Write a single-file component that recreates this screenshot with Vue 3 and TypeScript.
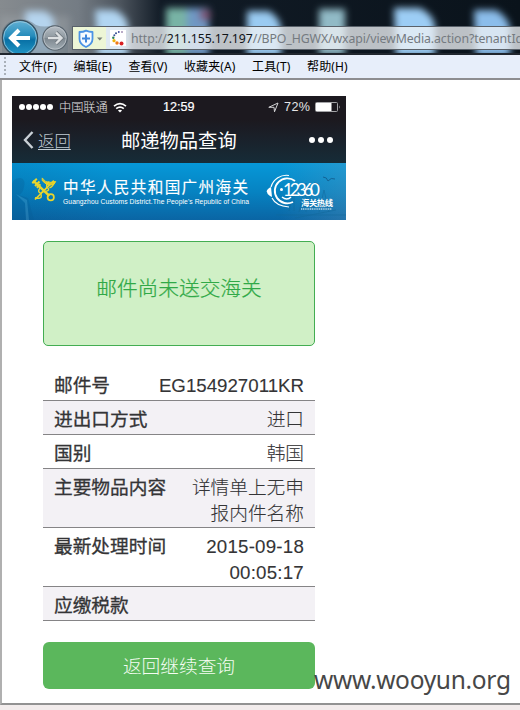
<script setup lang="ts">
interface Row {
  label: string
  lines: string[]
  wide?: boolean
}

const menus: string[] = ['文件(F)', '编辑(E)', '查看(V)', '收藏夹(A)', '工具(T)', '帮助(H)']

const rows: Row[] = [
  { label: '邮件号', lines: ['EG154927011KR'] },
  { label: '进出口方式', lines: ['进口'] },
  { label: '国别', lines: ['韩国'] },
  { label: '主要物品内容', lines: ['详情单上无申', '报内件名称'] },
  { label: '最新处理时间', lines: ['2015-09-18', '00:05:17'], wide: true },
  { label: '应缴税款', lines: [] },
]
</script>

<template>
  <div class="window">
    <header class="glass">
      <svg class="backdrop" width="520" height="53" viewBox="0 0 520 53" aria-hidden="true">
        <defs>
          <linearGradient id="glassBase" x1="0" x2="1" y1="0" y2="0">
            <stop offset="0" stop-color="#868b8f" />
            <stop offset=".15" stop-color="#747c84" />
            <stop offset=".23" stop-color="#4d555e" />
            <stop offset=".31" stop-color="#111b26" />
            <stop offset="1" stop-color="#0a131b" />
          </linearGradient>
          <filter id="soft" x="-10%" y="-40%" width="120%" height="180%">
            <feGaussianBlur stdDeviation="3.600" />
          </filter>
        </defs>
        <rect width="520" height="53" fill="url(#glassBase)" />
        <g filter="url(#soft)">
          <path d="M0 16h70v40H0z" fill="#a2a8ac" opacity=".4" />
          <path d="M25 11h19q11 4 10 14v30H27z" fill="#b5d4ee" />
          <path d="M95 10h20q12 6 13 16v30H98z" fill="#b1d5f2" />
          <path d="M166 8h24v48h-24z" fill="#78b3a5" />
          <path d="M187 8h22v48h-22z" fill="#7098c4" />
          <circle cx="205" cy="15" r="6" fill="#7c5373" />
          <path d="M247 11h22q11 7 12 17v28h-34z" fill="#9acbf2" />
          <path d="M319 9h26v46h-26z" fill="#91bac6" />
          <path d="M394 8h26q13 6 15 18v30h-39z" fill="#9ccdf5" />
          <path d="M474 10h22q12 7 14 18v28h-34z" fill="#8bbdeb" />
        </g>
      </svg>
      <svg class="nav" width="72" height="35" viewBox="0 0 72 35">
        <defs>
          <linearGradient id="backFill" x1="0" x2="0" y1="0" y2="1">
            <stop offset="0" stop-color="#63b2d5" />
            <stop offset=".45" stop-color="#258bbb" />
            <stop offset=".55" stop-color="#0870a5" />
            <stop offset="1" stop-color="#2399c8" />
          </linearGradient>
          <linearGradient id="fwdFill" x1="0" x2="0" y1="0" y2="1">
            <stop offset="0" stop-color="#b7bec5" />
            <stop offset=".5" stop-color="#8e989f" />
            <stop offset=".52" stop-color="#7d878f" />
            <stop offset="1" stop-color="#a4afb6" />
          </linearGradient>
        </defs>
        <path d="M2 12Q8 1 20 1q9 0 16 6 8 3 18 0 10 0 14 11v17H2z" fill="#6e7b85" opacity=".5" />
        <circle cx="20" cy="20" r="17.6" fill="url(#backFill)" stroke="#39505f" stroke-width="1.3" />
        <circle cx="20" cy="20" r="16.4" fill="none" stroke="#a0c9dd" stroke-width=".8" />
        <path d="M30 20H12M19 12l-8 8 8 8" fill="none" stroke="#fff" stroke-width="4" />
        <circle cx="55" cy="20" r="12.2" fill="url(#fwdFill)" stroke="#59656f" stroke-width="1.2" />
        <circle cx="55" cy="20" r="11.2" fill="none" stroke="#c5ccd1" stroke-width=".7" />
        <path d="M48 20h13M56 14.5l5.5 5.5-5.5 5.5" fill="none" stroke="#717980" stroke-width="4" />
        <path d="M48 20h13M56 14.5l5.5 5.5-5.5 5.5" fill="none" stroke="#dde0e2" stroke-width="2.4" />
      </svg>
      <div class="address">
        <div class="shield">
          <svg width="33" height="22" viewBox="0 0 33 22">
            <path d="M6.5 5q4 0 6.500-1.400Q16 5 19.500 5v7q0 5-6.500 8-6.500-3-6.500-8z" fill="#f6fbff" stroke="#4b93e5" stroke-width="1.800" stroke-linejoin="round" />
            <path d="M13 7.500v8M9 11.500h8" stroke="#3f86dc" stroke-width="2" />
            <path d="M24 10.500h5.500l-2.700 3z" fill="#777f78" />
          </svg>
        </div>
        <svg class="favicon" width="16" height="16" viewBox="0 0 16 16">
          <rect width="16" height="16" fill="#fff" />
          <circle cx="12" cy="2" r=".8" fill="#604080" />
          <circle cx="8.800" cy="2" r=".9" fill="#3b4598" />
          <circle cx="6" cy="3.300" r="1" fill="#35508f" />
          <circle cx="4.300" cy="5.300" r="1" fill="#38509a" />
          <circle cx="3.300" cy="7.700" r="1.200" fill="#2c8050" />
          <circle cx="4" cy="10.700" r="1.600" fill="#f0b30d" />
          <circle cx="7" cy="13" r="1.700" fill="#ef7b19" />
          <circle cx="11.500" cy="13.500" r="2" fill="#d82124" />
        </svg>
        <span class="url">http://<b>211.155.17.197</b>//BPO_HGWX/wxapi/viewMedia.action?tenantId</span>
      </div>
    </header>

    <nav class="menubar">
      <i class="grip"></i>
      <span v-for="m in menus" :key="m" class="menu">{{ m }}</span>
    </nav>

    <main class="page">
      <section class="phone">
        <div class="phone-top">
          <div class="status">
            <span class="dots"><i v-for="n in 5" :key="n"></i></span>
            <span class="carrier">中国联通</span>
            <svg class="wifi" width="14" height="11" viewBox="0 0 14 11" fill="none" stroke="#fff" stroke-width="1.700">
              <path d="M1 4.200q6-5.200 12 0M3.200 6.700q3.800-3.200 7.600 0" />
              <path d="M7 10.500L4.900 8.500q2.100-1.500 4.200 0z" fill="#fff" stroke="none" />
            </svg>
            <span class="clock">12:59</span>
            <svg class="locate" width="11" height="11" viewBox="0 0 11 11">
              <path d="M.8 5.300L10 1 6.500 9.800 6 5.300z" fill="none" stroke="#d4d4d6" stroke-width="1" />
            </svg>
            <span class="percent">72%</span>
            <svg class="battery" width="26" height="10" viewBox="0 0 26 10">
              <rect x=".5" y=".5" width="22" height="9" rx="1" fill="none" stroke="#a4a4a7" />
              <rect x="1" y="1" width="15.500" height="8" fill="#fff" />
              <path d="M24 3.200q1.200 1.800 0 3.600z" fill="#ddd" />
            </svg>
          </div>
          <div class="titlebar">
            <svg width="11" height="18" viewBox="0 0 11 18"><path d="M9.500 1L2 9l7.500 8" fill="none" stroke="#c9d0d6" stroke-width="2.400" /></svg>
            <a class="back">返回</a>
            <h1>邮递物品查询</h1>
            <span class="more"><i></i><i></i><i></i></span>
          </div>
        </div>

        <div class="banner">
          <svg class="art" width="334" height="57" viewBox="0 0 334 57">
            <g fill="#075c95" opacity=".28">
              <path d="M0 21q2-7 9-6 5 2 3 9-1 6-5 8l9 3 6 22H0z" />
              <path d="M4 31l9 9 1 17h3l-2-20z" fill="#5aa9d2" />
            </g>
            <g fill="none" stroke="#12679a" stroke-width=".8" opacity=".65">
              <path d="M264 52h70M277 48l5-20v20M287 49l7-29v29M294 24l9 23M307 49l5-22 5 22M283 55l41-8" />
              <path d="M311 14q4 0 5 4 3-4 7-2M302 20q3 0 5 2" stroke="#0d4b79" stroke-width="1" />
            </g>
          </svg>
          <svg class="emblem" width="30" height="30" viewBox="0 0 30 30" fill="none" stroke="#ead52c">
            <path d="M3 4l18 17" stroke-width="2.800" />
            <path d="M2 7l5-5M5 10l5-5M7 12l4-4" stroke-width="2.200" />
            <circle cx="22.500" cy="22.500" r="3.500" stroke-width="1.900" />
            <path d="M26 4L5 25" stroke-width="1.900" />
            <path d="M13 1q3 5 8 5 4 0 7-1-1 4-6 4-5 0-9-5z" fill="#e2c928" stroke-width="1" />
            <path d="M21 5q-5 3-2 7 3 3-2 4-7 0-5 5 0 4-7 2M27 5q-2 6-6 7M11 12q-4 4 0 6" stroke-width="1.600" />
          </svg>
          <div class="banner-text">
            <strong>中华人民共和国广州海关</strong>
            <small>Guangzhou Customs District.The People's Republic of China</small>
          </div>
          <svg class="hotline" width="68" height="38" viewBox="0 0 68 38">
            <g fill="none" stroke="#fff">
              <path d="M29 7A12.500 12.500 0 1 0 27 28" stroke-width="1.900" />
              <path d="M23 1.500A16 16 0 0 0 5 13M6 24q4 8 17 9" stroke-width="1.200" />
              <path d="M16 23q5 4 9 0" stroke-width="1.500" />
            </g>
            <path d="M5 13q-8 4-1 9l2 1z" fill="#fff" />
            <circle cx="15.500" cy="15.500" r="1.500" fill="#fff" />
            <text x="17" y="22" class="digits" textLength="37" lengthAdjust="spacing">12360</text>
            <text x="35" y="32" class="hot" textLength="32">海关热线</text>
            <path d="M35 35h31" stroke="#d8edf6" stroke-width="1.500" stroke-dasharray="1.200 .6" opacity=".8" />
          </svg>
        </div>

        <div class="content">
          <div class="notice">邮件尚未送交海关</div>
          <dl class="table">
            <div v-for="r in rows" :key="r.label" class="row" :class="{ wide: r.wide }">
              <dt>{{ r.label }}</dt>
              <dd><span v-for="l in r.lines" :key="l">{{ l }}</span></dd>
            </div>
          </dl>
          <button class="again">返回继续查询</button>
        </div>
      </section>
      <div class="watermark">www.wooyun.org</div>
    </main>
  </div>
</template>

<style>
body {
  margin: 0;
  overflow: hidden;
}
</style>

<style scoped>
* {
  box-sizing: border-box;
}
.window {
  width: 520px;
  height: 710px;
  display: flex;
  flex-direction: column;
  overflow: hidden;
  background: #f2ecec;
  font-family: "Liberation Sans", "Noto Sans CJK SC", sans-serif;
}
.glass {
  position: relative;
  height: 53px;
  flex: none;
  display: flex;
  align-items: flex-start;
  padding-top: 18px;
  overflow: hidden;
}
.backdrop {
  position: absolute;
  left: 0;
  top: 0;
}
.nav {
  position: relative;
  flex: none;
}
.address {
  position: relative;
  flex: none;
  width: 460px;
  height: 24px;
  margin-top: 8px;
  border: 1px solid #59616a;
  background: rgba(236, 240, 244, 0.79);
  display: flex;
  align-items: center;
}
.shield {
  width: 33px;
  height: 22px;
  background: #edf6d6;
}
.favicon {
  margin-left: 4px;
  flex: none;
}
.url {
  margin-left: 5px;
  padding-top: 2px;
  font: 12.3px/22px "Noto Sans", sans-serif;
  letter-spacing: -0.1px;
  color: #747a80;
  white-space: nowrap;
}
.url b {
  font-weight: 400;
  color: #101418;
}
.menubar {
  height: 27px;
  flex: none;
  display: flex;
  align-items: center;
  border-top: 2px solid #20262e;
  border-bottom: 2px solid #8d8d90;
  background: #e7eefa;
  color: #000;
  font: 12px/22px "Noto Sans", "Noto Sans CJK SC", sans-serif;
}
.grip {
  width: 2px;
  height: 20px;
  margin: 0 13px 0 4px;
  background: repeating-linear-gradient(#a9b0b9 0 2px, transparent 2px 4px);
}
.menu {
  white-space: nowrap;
  margin-right: 16.6px;
  letter-spacing: 0.1px;
}
.page {
  position: relative;
  height: 625px;
  flex: none;
  border-left: 2px solid #b0b0b0;
  border-bottom: 2px solid #929292;
  background: #fff;
  padding: 16px 0 0 10px;
}
.phone {
  width: 334px;
  display: flex;
  flex-direction: column;
}
.phone-top {
  height: 67px;
  background: linear-gradient(#1c191f 0 35%, #1a2029 60%, #162c38);
  color: #fff;
}
.status {
  height: 22px;
  display: flex;
  align-items: center;
  padding-left: 7px;
  white-space: nowrap;
}
.dots {
  display: flex;
  gap: 1px;
  width: 39px;
}
.dots i {
  width: 6px;
  height: 6px;
  border-radius: 50%;
  background: #fff;
}
.carrier {
  width: 50px;
  margin-left: 1px;
  font-size: 12.2px;
  font-weight: 300;
  color: #e4e4e6;
}
.wifi {
  margin-left: 4px;
}
.clock {
  width: 35px;
  margin-left: 36px;
  font-size: 12.6px;
  -webkit-text-stroke: 0.2px #fff;
}
.locate {
  margin-left: 70px;
}
.percent {
  width: 27px;
  margin-left: 5px;
  font-size: 12.6px;
  letter-spacing: 0.4px;
  color: #e5e5e6;
}
.battery {
  margin-left: 4px;
}
.titlebar {
  height: 45px;
  display: flex;
  align-items: center;
  padding: 0 0 1px 11px;
}
.back {
  width: 34px;
  margin-left: 4px;
  font-size: 16.4px;
  font-weight: 300;
  text-decoration: underline;
  text-underline-offset: 2px;
  text-decoration-thickness: 1px;
  color: #c1cbd3;
}
h1 {
  width: 120px;
  margin: 0 0 0 49px;
  font-size: 19.3px;
  font-weight: 400;
  white-space: nowrap;
}
.more {
  display: flex;
  gap: 3px;
  margin-left: 68px;
}
.more i {
  width: 6px;
  height: 6px;
  border-radius: 50%;
  background: #fff;
}
.banner {
  position: relative;
  height: 57px;
  display: flex;
  background: linear-gradient(90deg, rgba(0, 60, 110, 0.12), transparent 30% 80%, rgba(120, 160, 190, 0.25)), linear-gradient(#0698d8, #0683c2 50%, #0a65a4);
  color: #fff;
  padding: 14px 0 0 18px;
}
.art {
  position: absolute;
  left: 0;
  top: 0;
}
.emblem {
  position: relative;
  width: 28px;
  height: 27px;
  flex: none;
}
.banner-text {
  position: relative;
  width: 190px;
  flex: none;
  margin-left: 5px;
  display: flex;
  flex-direction: column;
  white-space: nowrap;
}
.banner-text strong {
  font-size: 15.6px;
  line-height: 21px;
  font-weight: 400;
  letter-spacing: 1.35px;
  -webkit-text-stroke: 0.15px #fff;
}
.banner-text small {
  font-size: 6.75px;
  line-height: 8px;
  letter-spacing: 0.07px;
}
.hotline {
  position: relative;
  margin: -3px 0 0 13px;
}
.digits {
  font: 17.5px "Lato", sans-serif;
  fill: #fff;
}
.hot {
  font: 700 8.3px "Noto Sans CJK SC", sans-serif;
  fill: #fff;
}
.content {
  padding: 21px 31px 0;
}
.notice {
  height: 105px;
  border: 1.5px solid #43ad52;
  border-radius: 5px;
  background: #d0f0c6;
  color: #30a947;
  font-size: 20.7px;
  font-weight: 300;
  line-height: 93px;
  text-align: center;
  -webkit-text-stroke: 0.25px #30a947;
}
.table {
  width: 272px;
  margin: 20px 0 0;
  font-size: 18.7px;
  line-height: 25.8px;
}
.row {
  display: flex;
  justify-content: space-between;
  padding: 6px 11px 0;
  min-height: 34.2px;
  border-bottom: 1px solid #858486;
  color: #343436;
}
.row:first-child {
  min-height: 35px;
  padding-top: 7px;
}
.row:nth-child(even) {
  background: #f3f1f5;
}
.wide dd {
  letter-spacing: 0.22px;
}
dt {
  font-weight: 400;
  -webkit-text-stroke: 0.3px #343436;
}
dd {
  margin: 0;
  font-weight: 300;
  display: flex;
  flex-direction: column;
  align-items: flex-end;
  -webkit-text-stroke: 0.1px #343436;
}
.again {
  display: block;
  width: 272px;
  height: 47px;
  margin-top: 21px;
  padding: 0 0 1px;
  border: 0;
  border-radius: 6px;
  background: #5bb75c;
  color: #f4fcf2;
  font: 300 18.7px "Noto Sans CJK SC", sans-serif;
}
.watermark {
  position: absolute;
  left: 312px;
  top: 583px;
  font: 24.5px/34px "Noto Sans", sans-serif;
  letter-spacing: -0.3px;
  color: #474747;
  white-space: nowrap;
}
</style>
